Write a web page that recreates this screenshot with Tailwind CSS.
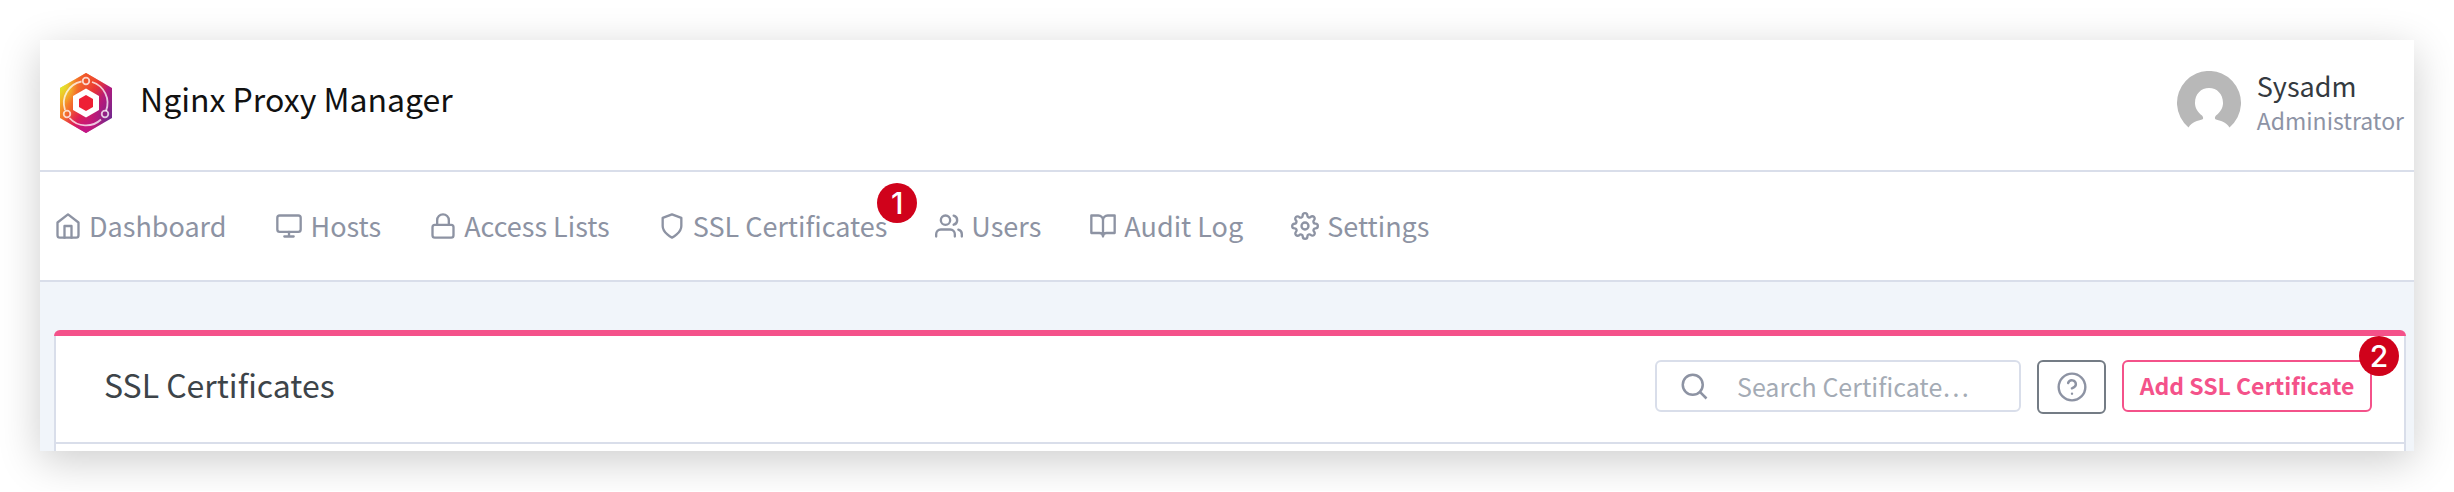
<!DOCTYPE html>
<html lang="en">
<head>
<meta charset="utf-8">
<title>Nginx Proxy Manager</title>
<script src="https://cdn.jsdelivr.net/npm/@tailwindcss/browser@4"></script>
</head>
<body class="bg-white p-10 font-['Noto_Sans_CJK_SC',sans-serif] text-[#495057]">
<div class="bg-[#f1f5fa] shadow-[0_10px_40px_rgba(0,0,0,0.2)]">
  <header class="flex items-center justify-between border-b-2 border-[#d9deea] bg-white pt-[31px] pr-2.5 pb-[35px] pl-5">
    <a href="#" class="flex items-center gap-7 text-[32px] leading-10 text-[#111]">
      <svg class="h-[60px] w-[52px]" viewBox="0 0 52 60">
        <defs>
          <linearGradient id="base" x1="0" y1="0.2" x2="1" y2="0.8">
            <stop offset="0" stop-color="#f5dc2a"/><stop offset="0.28" stop-color="#f4762a"/><stop offset="0.5" stop-color="#e6273a"/><stop offset="0.72" stop-color="#b31a7c"/><stop offset="1" stop-color="#6a2a90"/>
          </linearGradient>
          <radialGradient id="lime" cx="0" cy="0.2" r="0.35"><stop offset="0" stop-color="#d8f02c"/><stop offset="1" stop-color="#f5c02a" stop-opacity="0"/></radialGradient>
          <radialGradient id="top" cx="0.55" cy="0" r="0.45"><stop offset="0" stop-color="#f0502a"/><stop offset="1" stop-color="#f0502a" stop-opacity="0"/></radialGradient>
          <radialGradient id="foot" cx="0.45" cy="1" r="0.45"><stop offset="0" stop-color="#c0148a"/><stop offset="1" stop-color="#e0186a" stop-opacity="0"/></radialGradient>
        </defs>
        <path d="M26 0L52 15V45L26 60L0 45V15Z" fill="url(#base)"/>
        <path d="M26 0L52 15V45L26 60L0 45V15Z" fill="url(#lime)"/>
        <path d="M26 0L52 15V45L26 60L0 45V15Z" fill="url(#top)"/>
        <path d="M26 0L52 15V45L26 60L0 45V15Z" fill="url(#foot)"/>
        <g fill="none" stroke="#fff" stroke-opacity="0.75" stroke-width="1.8">
          <path d="M21.500 8.500A22 22 0 0 0 5 37M9.500 45A22 22 0 0 0 41 46.500M46 38A22 22 0 0 0 32 9"/>
          <circle cx="26" cy="8" r="3.300"/><circle cx="7" cy="41" r="3.300"/><circle cx="45" cy="41" r="3.300"/>
        </g>
        <path d="M26 15.500L39 23V37L26 44.500L13 37V23Z" fill="#fff"/>
        <path d="M26 22L33 26V34L26 38L19 34V26Z" fill="#ee1f35"/>
      </svg>
      <span class="pb-2.5">Nginx Proxy Manager</span>
    </a>
    <a href="#" class="flex items-center gap-4">
      <svg class="size-16" viewBox="0 0 64 64"><path d="M11.500 56.500A32 32 0 1 1 52.500 56.500C49 51 43 49.500 39 48.500C37.500 48 37.500 46 39 44.500C43.500 41 46 37 46 32C46 23 40 17 32 17S18 23 18 32C18 37 20.500 41 25 44.500C26.500 46 26.500 48 25 48.500C21 49.500 15 51 11.500 56.500Z" fill="#b8b8b8"/></svg>
      <span class="flex flex-col gap-1.5">
        <span class="text-[27px] leading-7 text-[#343a40]">Sysadm</span>
        <span class="text-[23px] leading-7 text-[#8d93a5]">Administrator</span>
      </span>
    </a>
  </header>
  <nav class="flex items-center gap-12 border-b-2 border-[#d9deea] bg-white px-[14px] pt-[34px] pb-[34px] text-[27px] leading-10 text-[#8d93a3]">
    <a href="#" class="flex items-center gap-[7px]">
      <svg class="size-7" viewBox="0 0 24 24" fill="none" stroke="currentColor" stroke-width="2" stroke-linecap="round" stroke-linejoin="round"><path d="M3 9l9-7 9 7v11a2 2 0 0 1-2 2H5a2 2 0 0 1-2-2z"/><path d="M9 22V12h6v10"/></svg>
      <span>Dashboard</span></a>
    <a href="#" class="flex items-center gap-2">
      <svg class="size-7" viewBox="0 0 24 24" fill="none" stroke="currentColor" stroke-width="2" stroke-linecap="round" stroke-linejoin="round"><rect x="2" y="3" width="20" height="14" rx="2"/><path d="M8 21h8M12 17v4"/></svg>
      <span>Hosts</span></a>
    <a href="#" class="flex items-center gap-[7px]">
      <svg class="size-7" viewBox="0 0 24 24" fill="none" stroke="currentColor" stroke-width="2" stroke-linecap="round" stroke-linejoin="round"><rect x="3" y="11" width="18" height="11" rx="2"/><path d="M7 11V7a5 5 0 0 1 10 0v4"/></svg>
      <span>Access Lists</span></a>
    <a href="#" class="relative flex items-center gap-[7px]">
      <svg class="size-7" viewBox="0 0 24 24" fill="none" stroke="currentColor" stroke-width="2" stroke-linecap="round" stroke-linejoin="round"><path d="M12 22s8-4 8-10V5l-8-3-8 3v7c0 6 8 10 8 10z"/></svg>
      <span>SSL Certificates</span>
      <span class="absolute -top-[23px] -right-[30px] flex size-10 items-center justify-center rounded-full bg-[#d0021b] font-['Inter',sans-serif] text-[30px] leading-10 font-medium text-white">1</span></a>
    <a href="#" class="flex items-center gap-2">
      <svg class="size-7" viewBox="0 0 24 24" fill="none" stroke="currentColor" stroke-width="2" stroke-linecap="round" stroke-linejoin="round"><path d="M17 21v-2a4 4 0 0 0-4-4H5a4 4 0 0 0-4 4v2"/><circle cx="9" cy="7" r="4"/><path d="M23 21v-2a4 4 0 0 0-3-3.870M16 3.130a4 4 0 0 1 0 7.750"/></svg>
      <span>Users</span></a>
    <a href="#" class="flex items-center gap-[7px]">
      <svg class="size-7" viewBox="0 0 24 24" fill="none" stroke="currentColor" stroke-width="2" stroke-linecap="round" stroke-linejoin="round"><path d="M2 3h6a4 4 0 0 1 4 4v14a3 3 0 0 0-3-3H2zM22 3h-6a4 4 0 0 0-4 4v14a3 3 0 0 1 3-3h7z"/></svg>
      <span>Audit Log</span></a>
    <a href="#" class="flex items-center gap-2">
      <svg class="size-7" viewBox="0 0 24 24" fill="none" stroke="currentColor" stroke-width="2" stroke-linecap="round" stroke-linejoin="round"><circle cx="12" cy="12" r="3"/><path d="M19.4 15a1.65 1.65 0 0 0 .33 1.82l.06.06a2 2 0 0 1 0 2.83 2 2 0 0 1-2.83 0l-.06-.06a1.65 1.65 0 0 0-1.82-.33 1.65 1.65 0 0 0-1 1.51V21a2 2 0 0 1-2 2 2 2 0 0 1-2-2v-.09A1.65 1.65 0 0 0 9 19.4a1.65 1.65 0 0 0-1.82.33l-.06.06a2 2 0 0 1-2.83 0 2 2 0 0 1 0-2.83l.06-.06a1.65 1.65 0 0 0 .33-1.82 1.65 1.65 0 0 0-1.51-1H3a2 2 0 0 1-2-2 2 2 0 0 1 2-2h.09A1.65 1.65 0 0 0 4.6 9a1.65 1.65 0 0 0-.33-1.82l-.06-.06a2 2 0 0 1 0-2.83 2 2 0 0 1 2.83 0l.06.06a1.65 1.65 0 0 0 1.82.33H9a1.65 1.65 0 0 0 1-1.51V3a2 2 0 0 1 2-2 2 2 0 0 1 2 2v.09a1.65 1.65 0 0 0 1 1.51 1.65 1.65 0 0 0 1.82-.33l.06-.06a2 2 0 0 1 2.83 0 2 2 0 0 1 0 2.83l-.06.06a1.65 1.65 0 0 0-.33 1.82V9a1.65 1.65 0 0 0 1.51 1H21a2 2 0 0 1 2 2 2 2 0 0 1-2 2h-.09a1.65 1.65 0 0 0-1.51 1z"/></svg>
      <span>Settings</span></a>
  </nav>
  <main class="pt-12 pr-2 pl-[14px]">
    <section class="rounded-t-md bg-[#f4528a] pt-1.5">
      <div class="border-x-2 border-[#d9deea] bg-white pb-[7px]">
        <div class="flex items-start justify-between border-b-2 border-[#d9deea] pt-6 pr-8 pb-7 pl-12">
          <h1 class="pt-1 text-[32px] leading-10 text-[#3d4449]">SSL Certificates</h1>
          <div class="flex items-start gap-4">
            <label class="flex h-13 w-[366px] items-center gap-7 rounded-md border-2 border-[#d9deea] pl-[22px]">
              <svg class="size-[30px] shrink-0 text-[#8d93a3]" viewBox="0 0 24 24" fill="none" stroke="currentColor" stroke-width="2" stroke-linejoin="round"><circle cx="11" cy="11" r="8"/><path d="M22 22l-5.500-5.500"/></svg>
              <input type="text" aria-label="Search Certificate" placeholder="Search Certificate…" class="w-full min-w-0 bg-transparent text-[25px] leading-9 outline-none placeholder:text-[#a4abb5]">
            </label>
            <button type="button" aria-label="Help" class="flex h-[54px] w-[69px] items-center justify-center rounded-md border-2 border-[#747c85] text-[#8d93a3]">
              <svg class="size-8" viewBox="0 0 24 24" fill="none" stroke="currentColor" stroke-width="1.800" stroke-linecap="round" stroke-linejoin="round"><circle cx="12" cy="12" r="10"/><path d="M9.090 9a3 3 0 0 1 5.830 1c0 2-3 3-3 3M12 17h.01"/></svg>
            </button>
            <button type="button" class="relative h-13 w-[250px] rounded-md border-2 border-[#f4528a] pb-0.5 text-[23px] leading-9 font-bold text-[#f4528a]">Add SSL Certificate
              <span class="absolute -top-[26px] -right-[29px] flex size-10 items-center justify-center rounded-full bg-[#d0021b] font-['Inter',sans-serif] text-[30px] leading-10 font-medium text-white">2</span>
            </button>
          </div>
        </div>
      </div>
    </section>
  </main>
</div>
</body>
</html>
